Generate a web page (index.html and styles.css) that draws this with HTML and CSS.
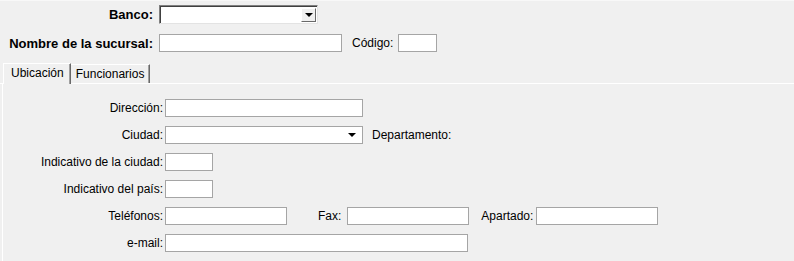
FILE: index.html
```html
<!DOCTYPE html>
<html lang="es">
<head>
    <meta charset="UTF-8">
    <title>Sucursal</title>
    <link rel="stylesheet" href="styles.css">
</head>
<body>
    <div class="form">
        <div class="top">
            <div class="row row-banco">
                <label class="lbl-top">Banco:</label>
                <div class="combo3d">
                    <span class="drop-btn"><span class="arrow"></span></span>
                </div>
            </div>
            <div class="row row-nombre">
                <label class="lbl-top">Nombre de la sucursal:</label>
                <div class="txt w-nombre"></div>
                <label class="lbl lbl-codigo">Código:</label>
                <div class="txt w-codigo"></div>
            </div>
        </div>

        <div class="tabs">
            <div class="tab active">Ubicación</div>
            <div class="tab">Funcionarios</div>
        </div>

        <div class="panel">
            <div class="prow">
                <label class="plbl">Dirección:</label>
                <div class="txt w-long"></div>
            </div>
            <div class="prow">
                <label class="plbl">Ciudad:</label>
                <div class="txt w-long combo-flat"><span class="arrow"></span></div>
                <label class="lbl lbl-depto">Departamento:</label>
            </div>
            <div class="prow">
                <label class="plbl">Indicativo de la ciudad:</label>
                <div class="txt w-small"></div>
            </div>
            <div class="prow">
                <label class="plbl">Indicativo del país:</label>
                <div class="txt w-small"></div>
            </div>
            <div class="prow">
                <label class="plbl">Teléfonos:</label>
                <div class="txt w-tel"></div>
                <label class="lbl lbl-fax">Fax:</label>
                <div class="txt w-tel"></div>
                <label class="lbl lbl-apartado">Apartado:</label>
                <div class="txt w-tel"></div>
            </div>
            <div class="prow">
                <label class="plbl">e-mail:</label>
                <div class="txt w-mail"></div>
            </div>
        </div>
    </div>
</body>
</html>
```

FILE: styles.css
```css
html, body {
    margin: 0;
    height: 100%;
    background: #f0f0f0;
}
body {
    font-family: "Liberation Sans", Arial, sans-serif;
    font-size: 12px;
    color: #000;
}
.form {
    border-top: 1px solid #f8f8f8;
    height: 100%;
    box-sizing: border-box;
    display: flex;
    flex-direction: column;
}
.top {
    padding-top: 4px;
}
.row {
    display: flex;
    align-items: center;
}
.row-nombre {
    margin-top: 10px;
}
.lbl-top {
    width: 153px;
    text-align: right;
    font-weight: bold;
    font-size: 13px;
    margin-right: 6px;
    white-space: nowrap;
}
.lbl {
    white-space: nowrap;
}
.txt {
    height: 18px;
    box-sizing: border-box;
    background: #fff;
    border: 1px solid #a5a5a5;
    position: relative;
}
.combo3d {
    width: 159px;
    height: 19px;
    box-sizing: border-box;
    background: #fff;
    border-top: 1px solid #808080;
    border-left: 1px solid #808080;
    border-right: 1px solid #e3e3e3;
    border-bottom: 1px solid #e3e3e3;
    box-shadow: inset 1px 1px 0 #404040;
    display: flex;
    justify-content: flex-end;
    padding: 2px 1px 1px 0;
}
.drop-btn {
    width: 15px;
    height: 14px;
    background: #f0f0f0;
    border-top: 1px solid #fff;
    border-left: 1px solid #fff;
    border-right: 1px solid #696969;
    border-bottom: 1px solid #696969;
    box-sizing: border-box;
    display: flex;
    align-items: center;
    justify-content: center;
}
.arrow {
    width: 0;
    height: 0;
    border-left: 4px solid transparent;
    border-right: 4px solid transparent;
    border-top: 4px solid #000;
}
.w-nombre { width: 183px; }
.w-codigo { width: 39px; }
.lbl-codigo {
    margin-left: 10px;
    margin-right: 5px;
}

/* pestañas */
.tabs {
    display: flex;
    align-items: flex-end;
    margin-top: 10px;
    padding-left: 3px;
    height: 21px;
    border-bottom: 1px solid #fff;
}
.tab {
    height: 18px;
    line-height: 18px;
    padding: 0 5px 0 5px;
    border-left: 1px solid #fff;
    border-top: 1px solid #fff;
    border-right: 1px solid #696969;
    box-shadow: inset -1px 0 0 #a0a0a0;
}
.tab.active {
    height: 20px;
    line-height: 19px;
    padding: 0 6px 0 7px;
    margin-bottom: -1px;
    background: #f0f0f0;
    position: relative;
}
.tab + .tab {
    border-left: none;
}

.panel {
    flex: 1;
    margin-left: 2px;
    border-left: 1px solid #fff;
    padding-top: 15px;
    display: flex;
    flex-direction: column;
    gap: 9px;
}
.prow {
    display: flex;
    align-items: center;
}
.plbl {
    width: 160px;
    text-align: right;
    margin-right: 2px;
    white-space: nowrap;
}
.w-long { width: 198px; }
.w-small { width: 48px; }
.w-tel { width: 122px; }
.w-mail { width: 303px; }
.combo-flat .arrow {
    position: absolute;
    right: 6px;
    top: 6px;
}
.lbl-depto { margin-left: 9px; }
.lbl-fax {
    margin-left: 31px;
    margin-right: 6px;
}
.lbl-apartado {
    margin-left: 12px;
    margin-right: 3px;
}
```
